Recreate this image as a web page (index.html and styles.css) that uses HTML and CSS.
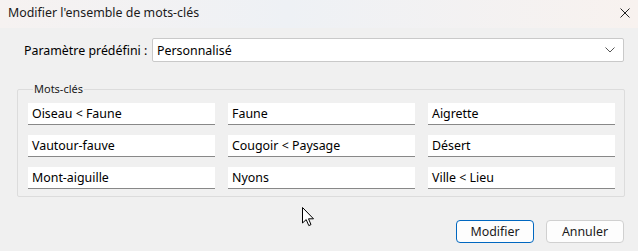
FILE: index.html
```html
<!DOCTYPE html>
<html lang="fr">
<head>
  <meta charset="UTF-8" />
  <title>Modifier l'ensemble de mots-clés</title>
  <link rel="stylesheet" href="styles.css">
</head>
<body>
  <div class="window">
    <div class="titlebar">
      <span class="title">Modifier l'ensemble de mots-clés</span>
      <svg class="close" width="10" height="10" viewBox="0 0 10 10">
        <path d="M0.5 0.5 L9.5 9.5 M9.5 0.5 L0.5 9.5" stroke="#222" stroke-width="1" fill="none"/>
      </svg>
    </div>

    <div class="content">
      <div class="preset-row">
        <label class="preset-label">Paramètre prédéfini :</label>
        <div class="select">
          <span>Personnalisé</span>
          <svg width="10" height="6" viewBox="0 0 10 6">
            <path d="M0.5 0.5 L5 5 L9.5 0.5" stroke="#555" stroke-width="1" fill="none"/>
          </svg>
        </div>
      </div>

      <fieldset class="group">
        <legend>Mots-clés</legend>
        <div class="grid">
          <div class="field">Oiseau &lt; Faune</div>
          <div class="field">Faune</div>
          <div class="field">Aigrette</div>
          <div class="field">Vautour-fauve</div>
          <div class="field">Cougoir &lt; Paysage</div>
          <div class="field">Désert</div>
          <div class="field">Mont-aiguille</div>
          <div class="field">Nyons</div>
          <div class="field">Ville &lt; Lieu</div>
        </div>
      </fieldset>

      <div class="buttons">
        <button class="btn primary">Modifier</button>
        <button class="btn">Annuler</button>
      </div>
    </div>

    <svg class="cursor" width="13" height="20" viewBox="0 0 13 20">
      <path d="M0.5 0.5 L0.5 16 L4.2 12.6 L6.8 18.6 L9 17.6 L6.5 11.8 L11.5 11.8 Z" fill="#fff" stroke="#000" stroke-width="1" stroke-linejoin="round"/>
    </svg>
  </div>
</body>
</html>
```

FILE: styles.css
```css
body {
  margin: 0;
  font-family: "Noto Sans", "Open Sans", sans-serif;
  font-size: 12.4px;
  color: #000;
  background: #f0f0f0;
}
.window {
  position: relative;
  width: 638px;
  height: 251px;
  overflow: hidden;
  background: #f0f0f0;
}
.titlebar {
  display: flex;
  justify-content: space-between;
  align-items: center;
  height: 28px;
  padding: 0 4px 3px 8px;
  box-sizing: border-box;
  background: linear-gradient(90deg, #f6f2f1 0%, #eef1f5 45%, #f8f2ef 100%);
}
.title {
  font-size: 12.4px;
  color: #1a1a1a;
}
.content {
  padding: 10px 14px 0 17px;
}
.preset-row {
  display: flex;
  align-items: center;
  padding-left: 7px;
}
.preset-label {
  width: 128px;
}
.select {
  flex: 1;
  display: flex;
  justify-content: space-between;
  align-items: center;
  height: 24px;
  box-sizing: border-box;
  padding: 0 8px 0 4px;
  background: #fff;
  border: 1px solid #c9c9c9;
  border-radius: 2px;
}
.group {
  margin: 21px 0 0;
  padding: 8px 9px 7px 10px;
  border: 1px solid #dcdcdc;
  border-radius: 2px;
}
.group legend {
  padding: 0 1px;
  margin-left: 5px;
  font-size: 11px;
  line-height: 12px;
  color: #1a1a1a;
}
.grid {
  display: grid;
  grid-template-columns: repeat(3, 187px);
  column-gap: 13px;
  row-gap: 10px;
}
.field {
  height: 22px;
  box-sizing: border-box;
  padding: 0 4px;
  line-height: 21px;
  background: #fff;
  border-bottom: 1px solid #888;
}
.buttons {
  display: flex;
  justify-content: flex-end;
  gap: 12px;
  margin-top: 23px;
}
.btn {
  width: 78px;
  height: 23px;
  font-family: inherit;
  font-size: 12.4px;
  background: #fdfdfd;
  border: 1px solid #d0d0d0;
  border-radius: 4px;
  color: #1a1a1a;
}
.btn.primary {
  border-color: #0067c0;
}
.close {
  margin-right: 4px;
}
.cursor {
  position: absolute;
  left: 302px;
  top: 207px;
}
```
